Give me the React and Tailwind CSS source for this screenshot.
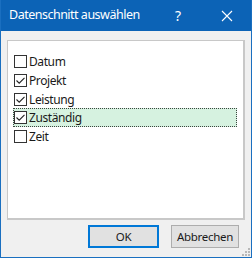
import React from "react";

const items = [
  { label: "Datum", checked: false },
  { label: "Projekt", checked: true },
  { label: "Leistung", checked: true },
  { label: "Zuständig", checked: true, selected: true },
  { label: "Zeit", checked: false },
];

function Box({ checked }) {
  return (
    <div className="w-[13px] h-[13px] border border-[#333] bg-white shrink-0 flex items-center justify-center">
      {checked && (
        <svg width="11" height="11" viewBox="0 0 11 11">
          <path d="M1.5 5.5 L4.2 8.2 L9.5 2.8" fill="none" stroke="#222" strokeWidth="1.1" />
        </svg>
      )}
    </div>
  );
}

export default function App() {
  return (
    <div
      className="w-[252px] h-[258px] bg-[#f0f0f0] border border-[#1a6fc0] border-t-0 flex flex-col overflow-hidden"
      style={{ fontFamily: '"Noto Sans", "Open Sans", sans-serif' }}
    >
      <div className="h-[31px] bg-[#0c63b6] -mx-px flex items-center text-white shrink-0">
        <span className="pl-[9px] text-[12.5px] tracking-[-0.5px] leading-none">Datenschnitt auswählen</span>
        <span className="ml-auto mr-[40px] text-[14px] leading-none">?</span>
        <svg width="12" height="12" viewBox="0 0 12 12" className="mr-[19px]">
          <path d="M1 1 L11 11 M11 1 L1 11" stroke="white" strokeWidth="1.1" />
        </svg>
      </div>
      <div className="mt-[9px] mx-[6px] h-[180px] bg-white border border-[#c8c8c8] border-b-2 border-r-2 pt-[11px] pl-[6px] pr-[6px]">
        {items.map((it) => (
          <div
            key={it.label}
            className={
              "h-[19px] flex items-center gap-[2px] text-[12px] tracking-[-0.4px] text-[#1a1a1a] " +
              (it.selected ? "bg-[#d6f2e0] border border-dotted border-[#3c463f] -ml-px -mt-px w-[224px]" : "")
            }
          >
            <Box checked={it.checked} />
            <span className="leading-none">{it.label}</span>
          </div>
        ))}
      </div>
      <div className="flex justify-end gap-[12px] mt-[5px] mr-[12px] text-[11.5px] tracking-[-0.3px] text-[#1a1a1a]">
        <button className="w-[71px] h-[23px] bg-[#e1e1e1] border-2 border-[#0078d7] flex items-center justify-center">
          OK
        </button>
        <button className="w-[68px] h-[23px] bg-[#e1e1e1] border border-[#adadad] flex items-center justify-center">
          Abbrechen
        </button>
      </div>
      <div className="flex-1 relative">
        <svg width="8" height="8" viewBox="0 0 8 8" className="absolute right-[1px] bottom-[1px]">
          <rect x="6" y="0" width="2" height="2" fill="#b8b8b8" />
          <rect x="3" y="3" width="2" height="2" fill="#b8b8b8" />
          <rect x="6" y="3" width="2" height="2" fill="#b8b8b8" />
          <rect x="0" y="6" width="2" height="2" fill="#b8b8b8" />
          <rect x="3" y="6" width="2" height="2" fill="#b8b8b8" />
          <rect x="6" y="6" width="2" height="2" fill="#b8b8b8" />
        </svg>
      </div>
    </div>
  );
}
